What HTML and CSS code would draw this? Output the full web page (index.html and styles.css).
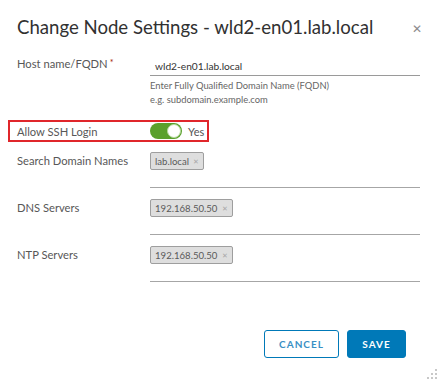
FILE: index.html
```html
<!DOCTYPE html>
<html>
<head>
<meta charset="utf-8">
<link rel="stylesheet" href="styles.css">
</head>
<body>
<div class="modal">
  <div class="header">
    <h1 class="title">Change Node Settings - wld2-en01.lab.local</h1>
    <span class="close">&#x2715;</span>
  </div>
  <div class="form">
    <div class="row host-row">
      <div class="label">Host name/FQDN<span class="req">*</span></div>
      <div class="control">
        <div class="input">wld2-en01.lab.local</div>
        <div class="hint">Enter Fully Qualified Domain Name (FQDN)</div>
        <div class="hint">e.g. subdomain.example.com</div>
      </div>
    </div>
    <div class="row ssh-row">
      <div class="label">Allow SSH Login</div>
      <div class="toggle"><span class="knob"></span></div>
      <span class="toggle-text">Yes</span>
    </div>
    <div class="row tag-row">
      <div class="label">Search Domain Names</div>
      <div class="tagbox"><span class="tag">lab.local <span class="x">&#x2715;</span></span></div>
    </div>
    <div class="row tag-row">
      <div class="label">DNS Servers</div>
      <div class="tagbox"><span class="tag">192.168.50.50 <span class="x">&#x2715;</span></span></div>
    </div>
    <div class="row tag-row">
      <div class="label">NTP Servers</div>
      <div class="tagbox"><span class="tag">192.168.50.50 <span class="x">&#x2715;</span></span></div>
    </div>
  </div>
  <div class="footer">
    <button class="btn btn-outline">CANCEL</button>
    <button class="btn btn-primary">SAVE</button>
  </div>
  <svg class="grip" width="10" height="10" viewBox="0 0 10 10">
    <rect x="8" y="0" width="2" height="2" fill="#c8c8c8"/>
    <rect x="8" y="4" width="2" height="2" fill="#c8c8c8"/>
    <rect x="4" y="4" width="2" height="2" fill="#c8c8c8"/>
    <rect x="8" y="8" width="2" height="2" fill="#c8c8c8"/>
    <rect x="4" y="8" width="2" height="2" fill="#c8c8c8"/>
    <rect x="0" y="8" width="2" height="2" fill="#c8c8c8"/>
  </svg>
</div>
</body>
</html>
```

FILE: styles.css
```css
html, body {
  margin: 0;
  padding: 0;
  background: #fff;
}
.modal {
  position: relative;
  width: 439px;
  height: 381px;
  box-sizing: border-box;
  font-family: Lato, "Open Sans", sans-serif;
  color: #565656;
}
.header {
  display: flex;
  justify-content: space-between;
  align-items: center;
  padding: 14px 17px 0 17px;
  height: 26px;
}
.title {
  margin: 0;
  font-weight: 400;
  font-size: 18.6px;
  color: #313131;
  line-height: 26px;
}
.close {
  font-size: 12px;
  color: #8c8c8c;
  margin-top: 2px;
}
.form {
  padding-top: 17px;
}
.row {
  display: flex;
  align-items: flex-start;
}
.label {
  width: 150px;
  box-sizing: border-box;
  padding-left: 17px;
  font-size: 11.2px;
  line-height: 16px;
  color: #575757;
  flex: none;
}
.req {
  color: #a32100;
  font-size: 9px;
  margin-left: 2px;
  vertical-align: 2px;
}
.host-row .label {
  margin-top: -2px;
}
.control {
  width: 270px;
}
.input {
  height: 18px;
  line-height: 18px;
  padding-left: 5px;
  font-size: 10.2px;
  color: #333;
  border-bottom: 1px solid #9a9a9a;
}
.hint {
  font-size: 9.4px;
  line-height: 14px;
  color: #666;
}
.input + .hint {
  margin-top: 3px;
}
.ssh-row {
  margin-top: 13px;
  margin-left: 8px;
  width: 201px;
  height: 22px;
  box-sizing: border-box;
  border: 2px solid #e0262b;
  align-items: center;
}
.ssh-row .label {
  width: 140px;
  padding-left: 7px;
  margin-top: 2px;
}
.toggle {
  width: 32px;
  height: 16px;
  border-radius: 8px;
  background: #5aa02c;
  position: relative;
  flex: none;
}
.knob {
  position: absolute;
  right: 1px;
  top: 1px;
  width: 14px;
  height: 14px;
  box-sizing: border-box;
  border: 1px solid #b5d99c;
  border-radius: 50%;
  background: #fff;
}
.toggle-text {
  flex: none;
  margin-left: 6px;
  font-size: 11px;
  color: #555;
}
.tag-row {
  margin-top: 10px;
}
.tag-row + .tag-row {
  margin-top: 11px;
}
.tag-row .label {
  margin-top: 1px;
}
.tagbox {
  display: flex;
  align-items: flex-start;
  width: 270px;
  height: 35px;
  border-bottom: 1px solid #a6a6a6;
}
.tag {
  display: flex;
  align-items: center;
  height: 16px;
  padding: 0 4px;
  font-size: 9.6px;
  color: #5a5a5a;
  background: #dedede;
  border: 1px solid #9e9e9e;
  border-radius: 2px;
  white-space: pre;
}
.tag .x {
  font-size: 7px;
  color: #a8a8a8;
  margin-left: 2px;
}
.footer {
  display: flex;
  justify-content: flex-end;
  gap: 8px;
  padding-right: 33px;
  margin-top: 48px;
}
.btn {
  height: 28px;
  box-sizing: border-box;
  border-radius: 3px;
  font-family: Lato, "Open Sans", sans-serif;
  font-weight: 700;
  font-size: 10px;
  letter-spacing: 1px;
  padding: 0;
  cursor: pointer;
}
.btn-outline {
  width: 75px;
  background: #fff;
  border: 1px solid #0079b8;
  color: #3a8fc4;
}
.btn-primary {
  width: 59px;
  background: #0079b8;
  border: 1px solid #0079b8;
  color: #fff;
}
.grip {
  position: absolute;
  right: 2px;
  bottom: 2px;
}
```
